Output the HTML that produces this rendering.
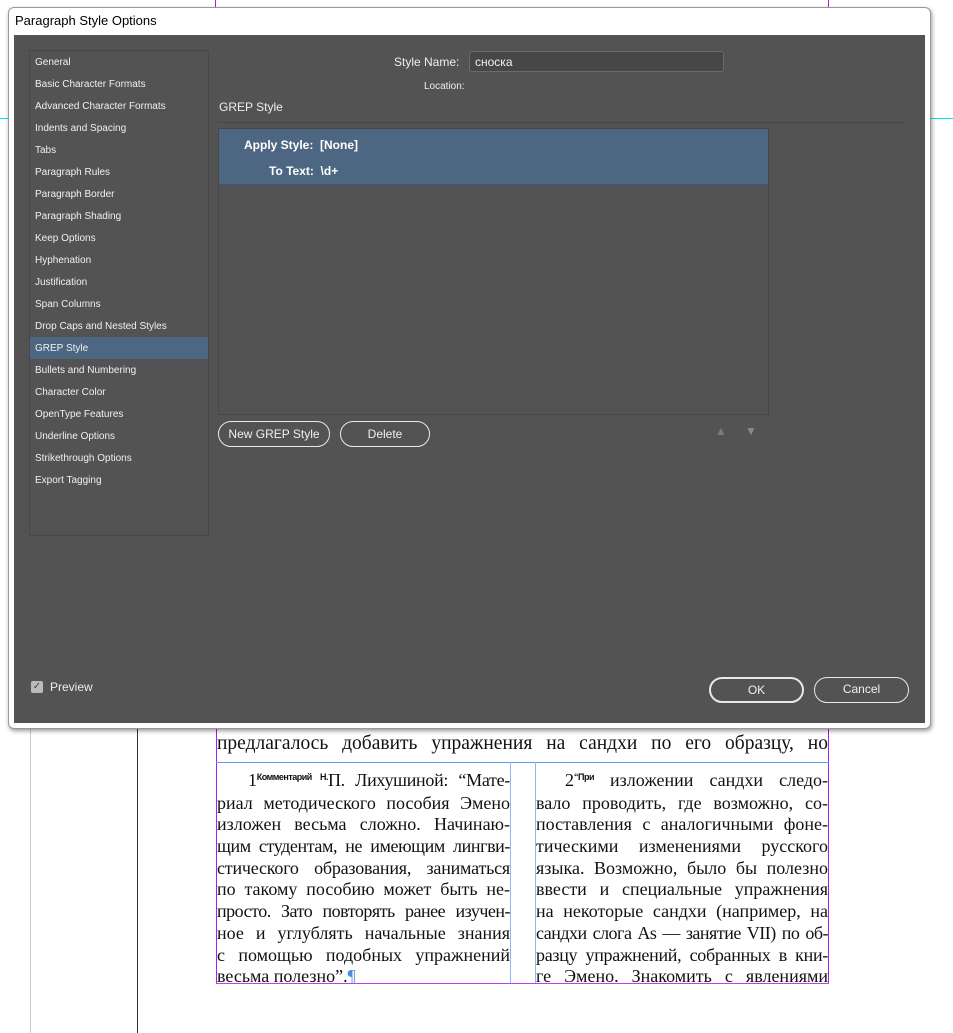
<!DOCTYPE html>
<html><head><meta charset="utf-8"><style>
*{margin:0;padding:0;box-sizing:border-box}
body{width:953px;height:1033px;background:#fff;position:relative;overflow:hidden;font-family:"Liberation Sans",sans-serif}
.abs{position:absolute}
.dlg{left:8px;top:7px;width:923px;height:722px;background:#fff;border:1px solid #999;border-radius:6px;box-shadow:1px 2px 4px rgba(0,0,0,.4)}
.title{left:15px;top:13px;font-size:13px;color:#000}
.panel{left:14px;top:35px;width:911px;height:688px;background:#535353}
.side{left:29px;top:50px;width:180px;height:486px;border:1px solid #474747}
.side div{position:absolute;left:5px;font-size:10px;color:#f0f0f0;height:22px;line-height:23px;width:178px}
.lbl{color:#eee;font-size:12px}
.btn{border:1.5px solid #e8e8e8;border-radius:13px;color:#f0f0f0;font-size:12px;text-align:center}
.doc{font-family:"Liberation Serif","DejaVu Serif",serif;font-size:18px;color:#111;line-height:21.7px}
.doc div{text-align:justify;text-align-last:justify;height:21.7px;overflow:visible;white-space:normal}
sup{font-family:"Liberation Sans",sans-serif;font-size:9px;font-weight:bold;vertical-align:6px;letter-spacing:-0.5px}
</style></head><body>
<div class="abs" style="left:215px;top:0;width:1px;height:8px;background:#a020f0"></div>
<div class="abs" style="left:828px;top:0;width:1px;height:8px;background:#a020f0"></div>
<div class="abs" style="left:930px;top:118px;width:23px;height:1px;background:#00e5ff"></div>
<div class="abs" style="left:0;top:118px;width:8px;height:1px;background:#00e5ff"></div>
<div class="abs" style="left:137px;top:729px;width:1px;height:304px;background:#333"></div>
<div class="abs" style="left:30px;top:729px;width:1px;height:304px;background:#ccc"></div>
<div class="abs" style="left:216px;top:729px;width:1px;height:255px;background:#a020f0"></div>
<div class="abs" style="left:828px;top:729px;width:1px;height:255px;background:#a020f0"></div>
<div class="abs" style="left:216px;top:983px;width:613px;height:1px;background:#c040e0"></div>
<div class="abs" style="left:216px;top:762px;width:613px;height:1px;background:#5b9bf0"></div>
<div class="abs" style="left:510px;top:762px;width:1px;height:221px;background:#8ab8f5"></div>
<div class="abs" style="left:535px;top:762px;width:1px;height:221px;background:#8ab8f5"></div>

<div class="abs doc" style="left:217px;top:733px;width:611px;font-size:19.5px"><div>предлагалось добавить упражнения на сандхи по его образцу, но</div></div>
<div class="abs doc" style="left:217px;top:767px;width:293px">
<div style="padding-left:31px;margin-bottom:4px;letter-spacing:-0.3px">1<sup>Комментарий&nbsp;Н.</sup>П. Лихушиной: “Мате-</div>
<div>риал методического пособия Эмено</div>
<div>изложен весьма сложно. Начинаю-</div>
<div style="letter-spacing:-0.4px">щим студентам, не имеющим лингви-</div>
<div style="letter-spacing:-0.2px">стического образования, заниматься</div>
<div>по такому пособию может быть не-</div>
<div style="letter-spacing:-0.5px">просто. Зато повторять ранее изучен-</div>
<div>ное и углублять начальные знания</div>
<div>с помощью подобных упражнений</div>
<div style="text-align-last:left">весьма полезно”.<span style="color:#4a8ae0">¶</span></div>
</div>
<div class="abs doc" style="left:536px;top:767px;width:292px">
<div style="padding-left:29px;margin-bottom:4px">2<sup>“При</sup> изложении сандхи следо-</div>
<div>вало проводить, где возможно, со-</div>
<div>поставления с аналогичными фоне-</div>
<div>тическими изменениями русского</div>
<div>языка. Возможно, было бы полезно</div>
<div>ввести и специальные упражнения</div>
<div>на некоторые сандхи (например, на</div>
<div style="letter-spacing:-0.5px;word-spacing:-1px">сандхи слога As — занятие VII) по об-</div>
<div style="letter-spacing:-0.3px">разцу упражнений, собранных в кни-</div>
<div>ге Эмено. Знакомить с явлениями</div>
</div>

<div class="abs dlg"></div>
<div class="abs title">Paragraph Style Options</div>
<div class="abs panel"></div>
<div class="abs side">
<div style="top:0">General</div>
<div style="top:22px">Basic Character Formats</div>
<div style="top:44px">Advanced Character Formats</div>
<div style="top:66px">Indents and Spacing</div>
<div style="top:88px">Tabs</div>
<div style="top:110px">Paragraph Rules</div>
<div style="top:132px">Paragraph Border</div>
<div style="top:154px">Paragraph Shading</div>
<div style="top:176px">Keep Options</div>
<div style="top:198px">Hyphenation</div>
<div style="top:220px">Justification</div>
<div style="top:242px">Span Columns</div>
<div style="top:264px">Drop Caps and Nested Styles</div>
<div style="top:286px;left:0;padding-left:5px;background:#4d6782">GREP Style</div>
<div style="top:308px">Bullets and Numbering</div>
<div style="top:330px">Character Color</div>
<div style="top:352px">OpenType Features</div>
<div style="top:374px">Underline Options</div>
<div style="top:396px">Strikethrough Options</div>
<div style="top:418px">Export Tagging</div>
</div>
<div class="abs lbl" style="left:394px;top:55px">Style Name:</div>
<div class="abs" style="left:469px;top:51px;width:255px;height:21px;background:#474747;border:1px solid #6a6a6a;border-radius:3px;color:#f0f0f0;font-size:12px;padding:3px 5px">сноска</div>
<div class="abs" style="left:424px;top:81px;color:#eee;font-size:10px">Location:</div>
<div class="abs lbl" style="left:219px;top:100px">GREP Style</div>
<div class="abs" style="left:218px;top:122px;width:686px;height:1px;background:#474747"></div>
<div class="abs" style="left:218px;top:128px;width:551px;height:287px;border:1px solid #474747"></div>
<div class="abs" style="left:219px;top:129px;width:549px;height:56px;background:#4d6782;border-bottom:1px solid #3f5670"></div>
<div class="abs" style="left:244px;top:138px;color:#fff;font-size:12px;font-weight:bold">Apply Style:&nbsp; [None]</div>
<div class="abs" style="left:269px;top:164px;color:#fff;font-size:12px;font-weight:bold">To Text:&nbsp; \d+</div>
<div class="abs btn" style="left:218px;top:421px;width:112px;height:26px;line-height:24px">New GREP Style</div>
<div class="abs btn" style="left:340px;top:421px;width:90px;height:26px;line-height:24px">Delete</div>
<div class="abs" style="left:715px;top:424px;color:#7a7a7a;font-size:12px">▲</div>
<div class="abs" style="left:745px;top:424px;color:#8a8a8a;font-size:12px">▼</div>
<div class="abs" style="left:31px;top:681px;width:12px;height:12px;background:#bbb;border-radius:2px;color:#444;font-size:10px;line-height:12px;text-align:center">✓</div>
<div class="abs lbl" style="left:50px;top:680px">Preview</div>
<div class="abs btn" style="left:709px;top:677px;width:95px;height:26px;line-height:23px;border-width:2px">OK</div>
<div class="abs btn" style="left:814px;top:677px;width:95px;height:26px;line-height:23px">Cancel</div>
</body></html>
